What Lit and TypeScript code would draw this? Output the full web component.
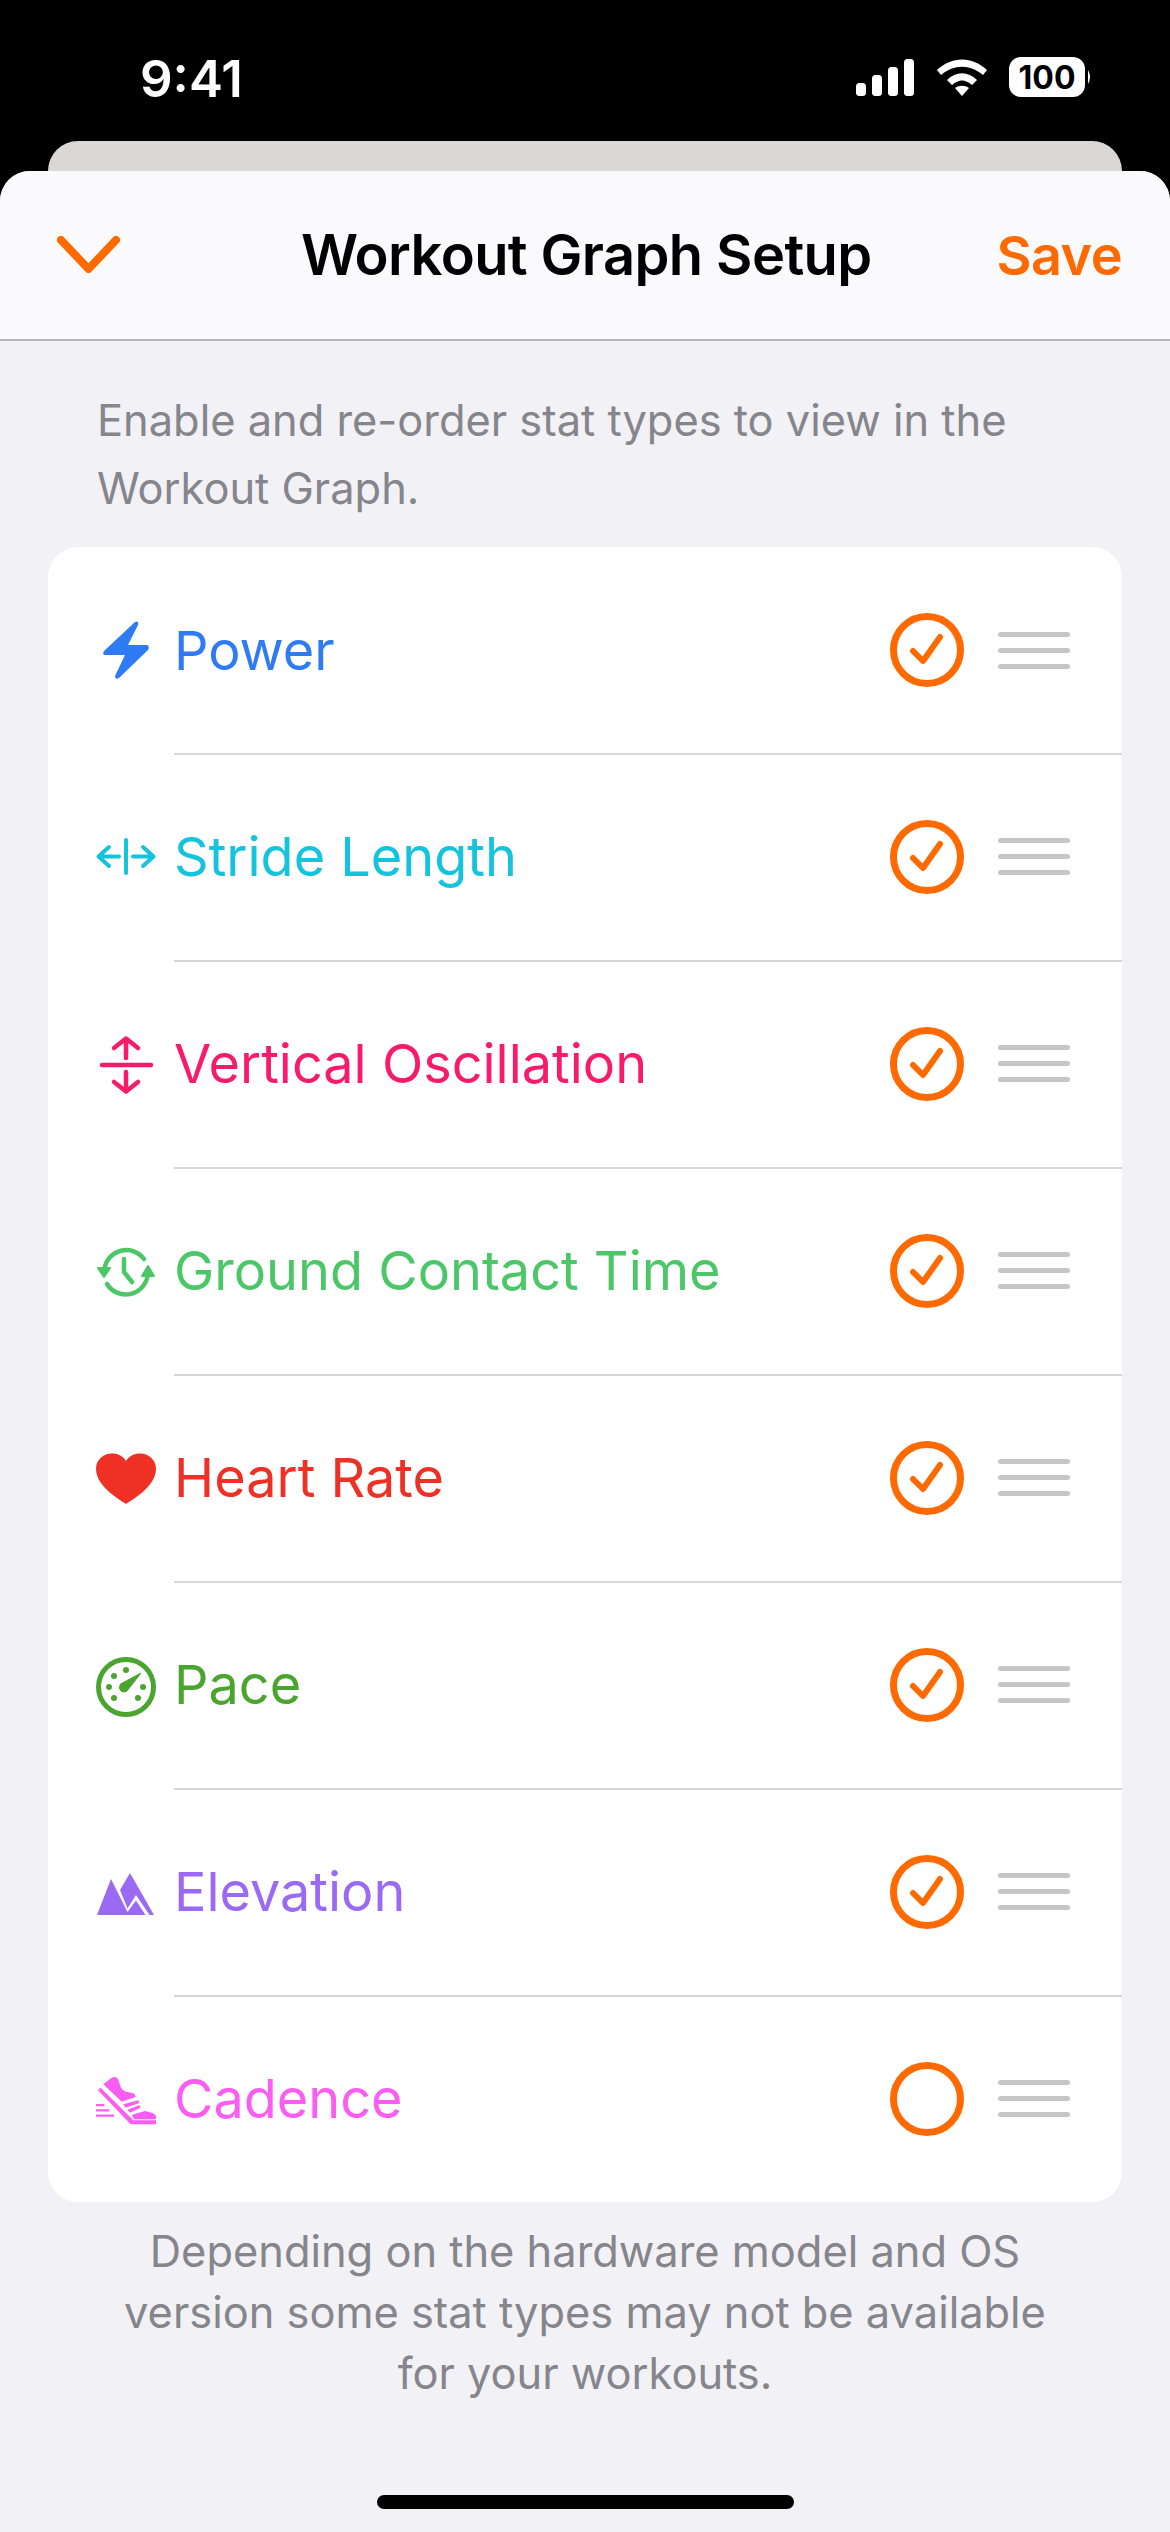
import {LitElement, html, svg, css} from 'lit';
import {customElement} from 'lit/decorators.js';

interface IStat {
    name: string;
    color: string;
    icon: unknown;
    enabled: boolean;
}

const STATS: IStat[] = [
    {
        name: 'Power', color: '#2f7bf5', enabled: true,
        icon: svg`<path d="M41 2 L10 31 Q8 35 11 35 L31 35 L21 56 Q21 60 25 58 L54 30 Q56 26 53 25 L34 25 L44 5 Q45 0 41 2 Z"/>`,
    },
    {
        name: 'Stride Length', color: '#14c3dc', enabled: true,
        icon: svg`<g fill="none" stroke="currentColor" stroke-width="4" stroke-linecap="round" stroke-linejoin="round">
            <path d="M32 13 V46"/><path d="M25 29.500 H5 M15 20 L4.500 29.500 L15 39"/><path d="M39 29.500 H59 M49 20 L59.500 29.500 L49 39"/></g>`,
    },
    {
        name: 'Vertical Oscillation', color: '#f81b6c', enabled: true,
        icon: svg`<g fill="none" stroke="currentColor" stroke-width="4.500" stroke-linecap="round" stroke-linejoin="round">
            <path d="M8 31 H57"/><path d="M32 24 V5 M20 14 L32 4.500 L44 14"/><path d="M32 38 V57 M20 48 L32 57.500 L44 48"/></g>`,
    },
    {
        name: 'Ground Contact Time', color: '#4bc768', enabled: true,
        icon: svg`<g fill="none" stroke="currentColor" stroke-width="4.500" stroke-linecap="round" stroke-linejoin="round">
            <path d="M10.500 28 A22 22 0 0 1 50 18"/><path d="M53.500 35 A22 22 0 0 1 13 43"/><path d="M30 18 V31 L38 41"/></g>
            <path d="M4 27 H16 L10 36 Z M48 35 H60 L54 25 Z" stroke="currentColor" stroke-width="2" stroke-linejoin="round"/>`,
    },
    {
        name: 'Heart Rate', color: '#ee3124', enabled: true,
        icon: svg`<path d="M32 56 C28 53 2 39 2 21 C2 11.500 9.500 5.500 18 5.500 C24 5.500 29 8 32 13 C35 8 40 5.500 46 5.500 C54.500 5.500 62 11.500 62 21 C62 39 36 53 32 56 Z"/>`,
    },
    {
        name: 'Pace', color: '#4aa52e', enabled: true,
        icon: svg`<circle cx="32" cy="32" r="27.500" fill="none" stroke="currentColor" stroke-width="5"/>
            <circle cx="32" cy="15" r="3"/><circle cx="20" cy="21" r="3"/><circle cx="15" cy="32" r="3"/><circle cx="20" cy="43" r="3"/><circle cx="49" cy="32" r="3"/><circle cx="44" cy="43" r="3"/>
            <path d="M47 18 L26.500 29 Q24 33 27 36 Q30 38 33 36 Z" stroke="currentColor" stroke-width="1" stroke-linejoin="round"/>`,
    },
    {
        name: 'Elevation', color: '#9a6af5', enabled: true,
        icon: svg`<path d="M17 17 L3 53 H51.500 L42 38.500 L33.500 50 Z"/>
            <path d="M36 11 L26 28 L33.500 46.500 L42 33 L55.500 53 H60 Z"/>`,
    },
    {
        name: 'Cadence', color: '#fb5cf2', enabled: false,
        icon: svg`<path d="M9.300 15.300 L17.700 8.700 Q22 7 24 10 L26.700 18 Q28 21 32 22.700 L39.300 24.300 Q41.500 25.500 41.700 28 L27.700 32.700 Z"/>
            <path d="M29.300 35.300 L44.300 31.300 L45.300 34 L31.700 38.700 Z"/>
            <path d="M33.300 40.700 L45.300 36.300 L46.700 38.700 L36 43.700 Z"/>
            <path d="M38 45.700 L51 42 L57.700 43.700 Q62 45 62 48 V50.300 H40 Z"/>
            <path d="M4 21.300 L6.700 18.700 L39.300 51.300 H62 V55.300 H36.700 Z"/>
            <path d="M2 35 H10.300 V37.300 H2 Z M2 40.200 H15.300 V42.500 H2 Z M2 45.500 H20 V47.800 H2 Z"/>`,
    },
];

@customElement('app-root')
export class AppRoot extends LitElement {
    static override styles = css`
        :host {
            display: block;
            width: 1170px;
            height: 2532px;
            overflow: hidden;
            background: #000;
            font-family: Inter, "Liberation Sans", sans-serif;
        }

        .status {
            height: 141px;
            display: flex;
            align-items: center;
            justify-content: space-between;
            box-sizing: border-box;
            padding: 0 78px 0 140px;
            color: #fff;
        }

        .clock {
            font-size: 51px;
            font-weight: 600;
            line-height: 1;
            margin-top: 15px;
        }

        .status-icons {
            display: flex;
            align-items: center;
            margin-top: 13px;
        }

        .behind {
            height: 30px;
            margin: 0 48px;
            background: #dbd7d6;
            border-radius: 30px 30px 0 0;
        }

        .sheet {
            height: 2361px;
            background: #f1f1f6;
            border-radius: 30px 30px 0 0;
            position: relative;
            overflow: hidden;
        }

        .nav {
            height: 170px;
            box-sizing: border-box;
            background: #fafafc;
            border-bottom: 2px solid #b5b5b8;
            display: flex;
            align-items: center;
            justify-content: space-between;
            padding: 0 48px 0 57px;
        }

        .title {
            font-size: 56px;
            font-weight: 600;
            color: #000;
            letter-spacing: -0.6px;
            margin-left: 55px;
        }

        .save {
            font-size: 54px;
            font-weight: 600;
            color: #ff6a00;
            letter-spacing: -0.6px;
        }

        .hint {
            margin: 0;
            padding: 45px 48px 0 97px;
            font-size: 43.400px;
            line-height: 68px;
            color: #85858b;
        }

        .card {
            margin: 25px 48px 0;
            background: #fff;
            border-radius: 30px;
            overflow: hidden;
        }

        .row {
            height: 207px;
            display: flex;
            align-items: center;
            padding-left: 126px;
            padding-right: 52px;
            position: relative;
            box-sizing: border-box;
        }

        .row:first-child {
            height: 206px;
        }

        .row + .row::before {
            content: '';
            position: absolute;
            top: 0;
            left: 126px;
            right: 0;
            height: 1.500px;
            background: #d6d6d8;
        }

        .ico {
            position: absolute;
            left: 46px;
            top: 50%;
            width: 64px;
            height: 60px;
            transform: translateY(-50%);
            fill: currentColor;
            overflow: visible;
        }

        .name {
            flex: 1;
            font-size: 54px;
            font-weight: 400;
        }

        .toggle {
            display: block;
            margin-right: 34px;
        }

        .grip {
            width: 72px;
            display: flex;
            flex-direction: column;
            gap: 11px;
        }

        .grip span {
            height: 5px;
            border-radius: 3px;
            background: #c6c6c8;
        }

        .foot {
            margin: 0;
            padding: 19px 110px 0;
            text-align: center;
            font-size: 43.400px;
            line-height: 61px;
            color: #85858b;
        }

        .home {
            position: absolute;
            left: 377px;
            bottom: 23px;
            width: 417px;
            height: 14px;
            border-radius: 7px;
            background: #000;
        }
    `;

    override render() {
        return html`
            <div class="status">
                <span class="clock">9:41</span>
                <span class="status-icons">
                    <svg width="236" height="40" viewBox="0 0 236 40" fill="#fff">
                        <rect x="0" y="26" width="10" height="13" rx="3.500"/>
                        <rect x="16" y="18" width="10" height="21" rx="3.500"/>
                        <rect x="32" y="10" width="10" height="29" rx="3.500"/>
                        <rect x="48" y="2" width="10" height="37" rx="3.500"/>
                        <path d="M81 13 C96 -1 116 -1 131 13 L127 18 C114 7 98 7 85 18 Z"/>
                        <path d="M91 23 C100 14 112 14 121 23 L116 28 C109 22 103 22 96 28 Z"/>
                        <path d="M99 31 C103 28 109 28 113 31 L106 39 Z"/>
                        <rect x="153" y="0" width="76" height="40" rx="12"/>
                        <path d="M232 13 Q236 20 232 27 Z"/>
                        <text x="191" y="31.500" text-anchor="middle" font-size="32" font-weight="700" fill="#000" font-family="Inter, sans-serif">100</text>
                    </svg>
                </span>
            </div>
            <div class="behind"></div>
            <div class="sheet">
                <div class="nav">
                    <svg width="64" height="38" viewBox="0 0 64 38" fill="none" stroke="#ff6a00" stroke-width="8" stroke-linecap="round" stroke-linejoin="round">
                        <path d="M4 4 L31.500 33 L59 4"/>
                    </svg>
                    <span class="title">Workout Graph Setup</span>
                    <span class="save">Save</span>
                </div>
                <p class="hint">Enable and re-order stat types to view in the Workout Graph.</p>
                <div class="card">
                    ${STATS.map((s) => html`
                        <div class="row" style="color: ${s.color}">
                            <svg class="ico" viewBox="0 0 64 60">${s.icon}</svg>
                            <span class="name">${s.name}</span>
                            <svg class="toggle" width="74" height="74" viewBox="0 0 74 74" fill="none" stroke="#ff6a00" stroke-linecap="round" stroke-linejoin="round">
                                <circle cx="37" cy="37" r="33.500" stroke-width="7"/>
                                ${s.enabled ? svg`<path d="M23 38 L33 48 L50 24" stroke-width="6"/>` : null}
                            </svg>
                            <div class="grip"><span></span><span></span><span></span></div>
                        </div>
                    `)}
                </div>
                <p class="foot">Depending on the hardware model and OS version some stat types may not be available for your workouts.</p>
                <div class="home"></div>
            </div>
        `;
    }
}

declare global {
    interface HTMLElementTagNameMap {
        'app-root': AppRoot;
    }
}
